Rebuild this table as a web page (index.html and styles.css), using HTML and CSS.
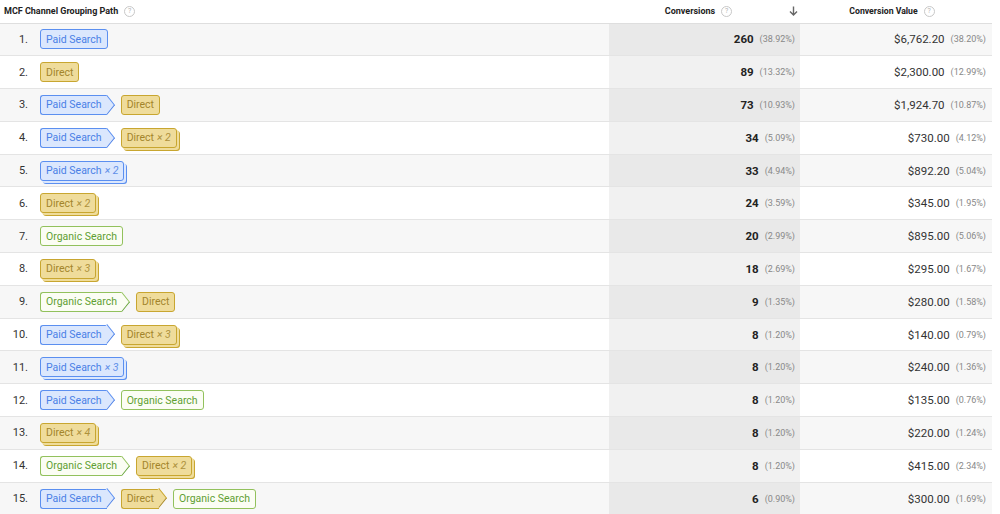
FILE: index.html
```html
<!DOCTYPE html>
<html>
<head>
<meta charset="utf-8">
<link rel="stylesheet" href="styles.css">
</head>
<body>
<div class="table">
  <div class="row head">
    <div class="hcell path-h">MCF Channel Grouping Path <span class="q">?</span></div>
    <div class="hcell conv-h">Conversions <span class="q">?</span>
      <svg class="sort" width="9" height="10" viewBox="0 0 9 10"><path d="M4.5 0.5V9M1 5.5L4.5 9L8 5.5" fill="none" stroke="#666" stroke-width="1.4"/></svg>
    </div>
    <div class="hcell val-h">Conversion Value <span class="q">?</span></div>
  </div>

  <div class="row odd"><div class="path"><span class="n">1.</span><span class="badge p">Paid Search</span></div><div class="conv"><b>260</b><span class="pct">(38.92%)</span></div><div class="val">$6,762.20<span class="pct">(38.20%)</span></div></div>
  <div class="row"><div class="path"><span class="n">2.</span><span class="badge d">Direct</span></div><div class="conv"><b>89</b><span class="pct">(13.32%)</span></div><div class="val">$2,300.00<span class="pct">(12.99%)</span></div></div>
  <div class="row odd"><div class="path"><span class="n">3.</span><span class="badge p arrow">Paid Search</span><span class="badge d">Direct</span></div><div class="conv"><b>73</b><span class="pct">(10.93%)</span></div><div class="val">$1,924.70<span class="pct">(10.87%)</span></div></div>
  <div class="row"><div class="path"><span class="n">4.</span><span class="badge p arrow">Paid Search</span><span class="badge d stack">Direct <i>× 2</i></span></div><div class="conv"><b>34</b><span class="pct">(5.09%)</span></div><div class="val">$730.00<span class="pct">(4.12%)</span></div></div>
  <div class="row odd"><div class="path"><span class="n">5.</span><span class="badge p stack">Paid Search <i>× 2</i></span></div><div class="conv"><b>33</b><span class="pct">(4.94%)</span></div><div class="val">$892.20<span class="pct">(5.04%)</span></div></div>
  <div class="row"><div class="path"><span class="n">6.</span><span class="badge d stack">Direct <i>× 2</i></span></div><div class="conv"><b>24</b><span class="pct">(3.59%)</span></div><div class="val">$345.00<span class="pct">(1.95%)</span></div></div>
  <div class="row odd"><div class="path"><span class="n">7.</span><span class="badge o">Organic Search</span></div><div class="conv"><b>20</b><span class="pct">(2.99%)</span></div><div class="val">$895.00<span class="pct">(5.06%)</span></div></div>
  <div class="row"><div class="path"><span class="n">8.</span><span class="badge d stack">Direct <i>× 3</i></span></div><div class="conv"><b>18</b><span class="pct">(2.69%)</span></div><div class="val">$295.00<span class="pct">(1.67%)</span></div></div>
  <div class="row odd"><div class="path"><span class="n">9.</span><span class="badge o arrow">Organic Search</span><span class="badge d">Direct</span></div><div class="conv"><b>9</b><span class="pct">(1.35%)</span></div><div class="val">$280.00<span class="pct">(1.58%)</span></div></div>
  <div class="row"><div class="path"><span class="n">10.</span><span class="badge p arrow">Paid Search</span><span class="badge d stack">Direct <i>× 3</i></span></div><div class="conv"><b>8</b><span class="pct">(1.20%)</span></div><div class="val">$140.00<span class="pct">(0.79%)</span></div></div>
  <div class="row odd"><div class="path"><span class="n">11.</span><span class="badge p stack">Paid Search <i>× 3</i></span></div><div class="conv"><b>8</b><span class="pct">(1.20%)</span></div><div class="val">$240.00<span class="pct">(1.36%)</span></div></div>
  <div class="row"><div class="path"><span class="n">12.</span><span class="badge p arrow">Paid Search</span><span class="badge o">Organic Search</span></div><div class="conv"><b>8</b><span class="pct">(1.20%)</span></div><div class="val">$135.00<span class="pct">(0.76%)</span></div></div>
  <div class="row odd"><div class="path"><span class="n">13.</span><span class="badge d stack">Direct <i>× 4</i></span></div><div class="conv"><b>8</b><span class="pct">(1.20%)</span></div><div class="val">$220.00<span class="pct">(1.24%)</span></div></div>
  <div class="row"><div class="path"><span class="n">14.</span><span class="badge o arrow">Organic Search</span><span class="badge d stack">Direct <i>× 2</i></span></div><div class="conv"><b>8</b><span class="pct">(1.20%)</span></div><div class="val">$415.00<span class="pct">(2.34%)</span></div></div>
  <div class="row odd"><div class="path"><span class="n">15.</span><span class="badge p arrow">Paid Search</span><span class="badge d arrow">Direct</span><span class="badge o">Organic Search</span></div><div class="conv"><b>6</b><span class="pct">(0.90%)</span></div><div class="val">$300.00<span class="pct">(1.69%)</span></div></div>
</div>
</body>
</html>
```
FILE: styles.css
```css
html, body {
  margin: 0;
  padding: 0;
  background: #fff;
}
body {
  font-family: Roboto, "Liberation Sans", Arial, sans-serif;
  color: #333;
  font-size: 11px;
}
.table {
  width: 992px;
}
.row {
  display: grid;
  grid-template-columns: 609px 191px 192px;
  height: 32.8px;
  box-sizing: border-box;
  border-bottom: 1px solid #e4e4e4;
  background: #fff;
}
.row.odd {
  background: #f7f7f7;
}
.row.head {
  height: 23.5px;
  border-bottom: 1px solid #dedede;
  background: #fff;
}
.hcell {
  display: flex;
  align-items: center;
  font-size: 9px;
  font-weight: bold;
  color: #222;
}
.path-h {
  padding-left: 4px;
}
.conv-h {
  justify-content: center;
  position: relative;
  padding-right: 12px;
}
.val-h {
  justify-content: center;
  padding-right: 8px;
  font-size: 8.7px;
}
.q {
  display: inline-flex;
  align-items: center;
  justify-content: center;
  width: 9px;
  height: 9px;
  border: 1px solid #c8c8c8;
  border-radius: 50%;
  color: #b4b4b4;
  font-size: 7px;
  font-weight: normal;
  margin-left: 6px;
}
.sort {
  position: absolute;
  right: 2px;
  top: 6px;
}
.path {
  display: flex;
  align-items: center;
}
.n {
  width: 28px;
  text-align: right;
  margin-right: 12px;
  color: #333;
}
.conv, .val {
  display: flex;
  align-items: center;
  justify-content: flex-end;
  padding-right: 5px;
}
.conv {
  background: #f1f1f1;
}
.row.odd .conv {
  background: #e9e9e9;
}
.conv b {
  color: #222;
  font-size: 11.5px;
}
.val {
  padding-right: 6px;
  color: #333;
  font-size: 11.5px;
}
.pct {
  font-size: 9px;
  color: #888;
  margin-left: 6px;
}
.badge {
  display: inline-flex;
  align-items: center;
  height: 20px;
  box-sizing: border-box;
  padding: 0 5px;
  border: 1px solid;
  border-radius: 3px;
  position: relative;
  z-index: 0;
  margin-right: 6px;
  white-space: nowrap;
  font-size: 10.5px;
}
.badge i {
  margin-left: 3px;
  opacity: 0.85;
}
.badge.p {
  background: #dbe7fd;
  border-color: #5b8ff0;
  color: #4a7fe6;
}
.badge.d {
  background: #efdc9b;
  border-color: #c8a630;
  color: #a3852b;
}
.badge.o {
  background: #fbfdf4;
  border-color: #92c15c;
  color: #5f9f32;
}
.badge.arrow {
  border-right: 0;
  border-top-right-radius: 0;
  border-bottom-right-radius: 0;
  padding-right: 5px;
  margin-right: 14px;
}
.badge.arrow::after {
  content: "";
  position: absolute;
  z-index: -1;
  right: -7.07px;
  top: 1.93px;
  width: 14.14px;
  height: 14.14px;
  box-sizing: border-box;
  background: inherit;
  border-top: 1px solid;
  border-right: 1px solid;
  border-color: inherit;
  transform: scaleX(0.8) rotate(45deg);
}
.badge.p.stack {
  box-shadow: 2px 2px 0 0 #dbe7fd, 3px 3px 0 0 #5b8ff0;
}
.badge.d.stack {
  box-shadow: 2px 2px 0 0 #efdc9b, 3px 3px 0 0 #c8a630;
}
```
